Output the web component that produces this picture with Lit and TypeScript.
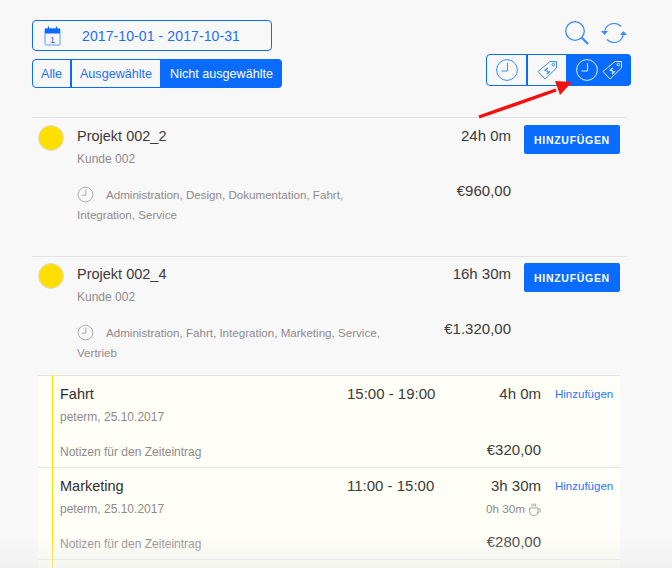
import { LitElement, html, css, svg } from "lit";
import { customElement } from "lit/decorators.js";

const clock = svg`<circle cx="12" cy="12" r="10.4" fill="none" stroke="currentColor" stroke-width="1"/><path d="M12.5 5V13H6.5" fill="none" stroke="currentColor" stroke-width="1"/>`;
const tag = svg`<g fill="none" stroke="currentColor" stroke-width="1" stroke-linejoin="round"><path d="M1 11.5 13 1.5H19.5V8L8 19Z"/><circle cx="16.3" cy="4.6" r="1.3"/><path d="M7.5 10.8 10.8 8M9.8 14 13 11.2M9 9.6 11.5 12.5" stroke-width="1.2"/></g>`;

interface Project { name: string; time: string; tags: string; price: string }
interface Entry { name: string; span: string; time: string; price: string; pause?: boolean }

const projects: Project[] = [
  { name: "Projekt 002_2", time: "24h 0m", tags: "Administration, Design, Dokumentation, Fahrt, Integration, Service", price: "€960,00" },
  { name: "Projekt 002_4", time: "16h 30m", tags: "Administration, Fahrt, Integration, Marketing, Service, Vertrieb", price: "€1.320,00" },
];
const entries: Entry[] = [
  { name: "Fahrt", span: "15:00 - 19:00", time: "4h 0m", price: "€320,00" },
  { name: "Marketing", span: "11:00 - 15:00", time: "3h 30m", price: "€280,00", pause: true },
];

@customElement("app-root")
export class AppRoot extends LitElement {
  static styles = css`
    :host {
      display: block; position: relative; width: 672px; height: 568px; overflow: hidden;
      background: #f8f8f8; font-family: "Liberation Sans", Arial, sans-serif; color: #3a3a3a;
    }
    .page { padding: 20px 45px 0 32px; }
    .top { display: flex; justify-content: space-between; height: 97px; }
    .filters { display: flex; flex-direction: column; align-items: flex-start; gap: 8px; }
    .date {
      box-sizing: border-box; width: 240px; height: 31px; border: 1px solid #0a6cff; border-radius: 4px;
      display: flex; align-items: center; color: #1a6ff5; font-size: 14px; padding-left: 11px;
    }
    .date svg { width: 17px; height: 20px; flex: none; }
    .date span { margin-left: 21px; letter-spacing: 0.1px; }
    .seg { display: flex; height: 29px; font-size: 12.6px; color: #1a6ff5; }
    .seg > div {
      box-sizing: border-box; display: flex; align-items: center; justify-content: center;
      border: 1px solid #0a6cff; margin-left: -1px; border-left-width: 2px;
    }
    .seg > div:first-child { margin-left: 0; border-left-width: 1px; border-radius: 4px 0 0 4px; }
    .seg > div:last-child { border-radius: 0 4px 4px 0; }
    .seg .on { background: #0a6cff; color: #fff; }
    .s1 { width: 39px; } .s2 { width: 91px; } .s3 { width: 122px; }
    .tools { display: flex; flex-direction: column; align-items: flex-end; gap: 9px; margin-right: -4px; }
    .icons { display: flex; gap: 12px; height: 24px; align-items: center; margin: 1px 4px 0 0; }
    .icons svg { display: block; color: #3b8cf5; }
    .seg2 { display: flex; height: 32px; color: #3b8cf5; }
    .seg2 > div {
      box-sizing: border-box; border: 1px solid #0a6cff; display: flex; align-items: center; justify-content: center;
      gap: 3px; margin-left: -1px; border-left-width: 2px;
    }
    .seg2 > div:first-child { margin-left: 0; border-left-width: 1px; border-radius: 4px 0 0 4px; width: 41px; }
    .seg2 .t { width: 41px; }
    .seg2 .on { width: 65px; background: #0a6cff; color: #dcebff; border-radius: 0 4px 4px 0; }
    .seg2 svg { display: block; }

    .project { border-top: 1px solid #e4e4e4; height: 139px; box-sizing: border-box; display: grid;
      grid-template-columns: 45px 1fr 78px 116px; grid-template-rows: 41px 1fr; }
    .project + .project { height: 137px; grid-template-rows: 40px 1fr; }
    .project + .project .dot { margin-top: 6px; }
    .project + .project .name, .project + .project .hours { padding-top: 8px; }
    .project + .project .add { margin-top: 6px; }
    .dot { width: 26px; height: 26px; border-radius: 50%; background: #ffdf00; border: 1px solid #ddd; box-sizing: border-box; margin: 7px 0 0 6px; }
    .name { font-size: 14.5px; line-height: 18px; padding-top: 9px; color: #3f3a3a; white-space: nowrap; }
    .client { font-size: 12px; line-height: 16px; color: #8e8a8c; margin-top: 6px; }
    .hours { font-size: 15px; line-height: 18px; padding-top: 9px; text-align: right; white-space: nowrap; grid-column: 3; }
    .head { grid-column: 2; }
    .add {
      justify-self: end; margin: 7px 7px 0 0; width: 96px; height: 29px; box-sizing: border-box; background: #0a6cff; color: #fff;
      border-radius: 2px; font-size: 10.5px; font-weight: 700; letter-spacing: 0.7px; display: flex; align-items: center; justify-content: center;
    }
    .tags { grid-column: 2; grid-row: 2; font-size: 11.6px; line-height: 20px; color: #8e8a8c; width: 305px; padding-top: 26px; }
    .tags svg { vertical-align: -4px; margin-right: 12px; color: #8e8a8c; }
    .price { grid-column: 3; grid-row: 2; text-align: right; font-size: 15px; line-height: 18px; padding-top: 23px; white-space: nowrap; }

    .entries { margin-top: -18px; margin-left: 6px; }
    .entry { position: relative; background: #fffff7; border-top: 1px solid #e4e4e4; height: 92px; box-sizing: border-box;
      display: grid; grid-template-columns: 1fr 116px 78px 79px; padding-left: 22px; width: 582px; }
    .entry::before { content: ""; position: absolute; left: 14px; top: -1px; bottom: 0; width: 1px; background: #ffdf00; }
    .col1 { padding-top: 9px; }
    .ename { font-size: 14.5px; line-height: 18px; color: #2e2e2e; }
    .who { font-size: 12px; line-height: 16px; color: #8e8a8c; margin-top: 6px; }
    .note { font-size: 12px; line-height: 16px; color: #8e8a8c; margin-top: 19px; }
    .span { font-size: 15px; line-height: 18px; padding-top: 9px; text-align: left; white-space: nowrap; }
    .col3 { text-align: right; padding-top: 9px; font-size: 15px; line-height: 18px; white-space: nowrap; }
    .pause { font-size: 11.7px; line-height: 16px; color: #8e8a8c; height: 16px; margin-top: 6px; display: flex; justify-content: flex-end; align-items: center; gap: 4px; }
    .pause svg { color: #9a9a9a; }
    .eprice { margin-top: 16px; }
    .link { color: #2a74ff; font-size: 11.5px; line-height: 18px; padding-top: 9px; padding-left: 14px; white-space: nowrap; }
    .stub { background: #fffff7; height: 12px; border-top: 1px solid #e4e4e4; position: relative; width: 582px; }
    .stub::before { content: ""; position: absolute; left: 14px; top: -1px; bottom: 0; width: 1px; background: #ffdf00; }
    .fade { position: absolute; left: 0; right: 0; bottom: 0; height: 34px; pointer-events: none;
      background: linear-gradient(to bottom, rgba(240,240,240,0), rgba(236,236,236,0.55)); }
    .arrow { position: absolute; left: 470px; top: 70px; }
  `;

  render() {
    return html`
      <div class="page">
        <div class="top">
          <div class="filters">
            <div class="date">
              <svg viewBox="0 0 17 20"><rect x="1" y="3" width="15" height="16" rx="1" fill="none" stroke="#5b9bf8"/><path d="M1 2.5h15v5H1z" fill="#0a6cff"/><path d="M4.5 0.5v3M12.5 0.5v3" stroke="#0a6cff" stroke-width="1.2"/><text x="8.5" y="17" font-size="9" text-anchor="middle" fill="#0a6cff" font-family="Liberation Sans">1</text></svg>
              <span>2017-10-01 - 2017-10-31</span>
            </div>
            <div class="seg">
              <div class="s1">Alle</div><div class="s2">Ausgewählte</div><div class="s3 on">Nicht ausgewählte</div>
            </div>
          </div>
          <div class="tools">
            <div class="icons">
              <svg width="24" height="24" viewBox="0 0 24 24"><circle cx="10" cy="10" r="9.3" fill="none" stroke="currentColor" stroke-width="1.3"/><path d="M16.8 16.8 23 23" stroke="currentColor" stroke-width="2.2"/></svg>
              <svg width="26" height="20" viewBox="0 0 26 20"><g fill="none" stroke="currentColor" stroke-width="1.1"><path d="M3.6 9.5A9.5 9.5 0 0 1 20 3.5"/><path d="M22.4 10.5A9.5 9.5 0 0 1 6 16.5"/></g><path d="M0 8h7l-3.5 4ZM19 12h7l-3.5-4Z" fill="currentColor"/></svg>
            </div>
            <div class="seg2">
              <div><svg width="24" height="24" viewBox="0 0 24 24">${clock}</svg></div>
              <div class="t"><svg width="21" height="20" viewBox="0 0 21 20">${tag}</svg></div>
              <div class="on"><svg width="24" height="24" viewBox="0 0 24 24">${clock}</svg><svg width="21" height="20" viewBox="0 0 21 20">${tag}</svg></div>
            </div>
          </div>
        </div>
        ${projects.map(p => html`
          <div class="project">
            <div class="dot"></div>
            <div class="head"><div class="name">${p.name}</div><div class="client">Kunde 002</div></div>
            <div class="hours">${p.time}</div>
            <div class="add">HINZUFÜGEN</div>
            <div class="tags"><svg width="17" height="17" viewBox="0 0 24 24">${clock}</svg>${p.tags}</div>
            <div class="price">${p.price}</div>
          </div>`)}
        <div class="entries">
          ${entries.map(e => html`
            <div class="entry">
              <div class="col1">
                <div class="ename">${e.name}</div>
                <div class="who">peterm, 25.10.2017</div>
                <div class="note">Notizen für den Zeiteintrag</div>
              </div>
              <div class="span">${e.span}</div>
              <div class="col3">
                <div>${e.time}</div>
                <div class="pause">${e.pause ? html`0h 30m <svg width="12" height="13" viewBox="0 0 12 13"><g fill="none" stroke="currentColor" stroke-width="0.9"><path d="M.5 5h8.5v3.5a4 4 0 0 1-4 4H4.500a4 4 0 0 1-4-4Z"/><path d="M9 6h1a1.400 1.400 0 0 1 0 3.200H8.700"/><path d="M3 .5v3M4.800 .5v3M6.600 .5v3"/></g></svg>` : ""}</div>
                <div class="eprice">${e.price}</div>
              </div>
              <div class="link">Hinzufügen</div>
            </div>`)}
          <div class="stub"></div>
        </div>
      </div>
      <div class="fade"></div>
      <svg class="arrow" width="110" height="50" viewBox="470 70 110 50">
        <path d="M479 117 556 90" stroke="#f50f0f" stroke-width="3.400" fill="none"/>
        <path d="M555 81 572 82 560 95Z" fill="#f50f0f"/>
      </svg>
    `;
  }
}
